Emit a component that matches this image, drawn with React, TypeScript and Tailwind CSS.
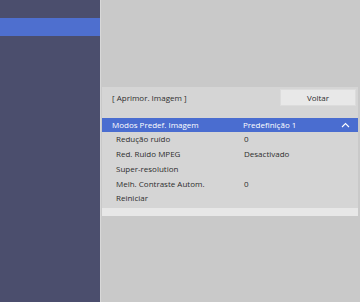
import React from "react";

const rows: { label: string; value?: string }[] = [
  { label: "Redução ruído", value: "0" },
  { label: "Red. Ruido MPEG", value: "Desactivado" },
  { label: "Super-resolution" },
  { label: "Melh. Contraste Autom.", value: "0" },
  { label: "Reiniciar" },
];

export default function App() {
  return (
    <div
      className="flex h-[302px] w-[360px] overflow-hidden text-[8px] text-[#2e2e2e]"
      style={{ fontFamily: '"Open Sans", "Noto Sans", sans-serif' }}
    >
      <div className="w-[100px] shrink-0 bg-[#4b4e6d] pt-[18px]">
        <div className="h-[18px] bg-[#4e6fcf]" />
      </div>
      <div className="flex-1 border-l border-[#d8d8d8] bg-[#c9c9c9] pt-[87px] pl-[1px] pr-[2px]">
        <div className="bg-[#d5d5d5]">
          <div className="flex h-[19px] items-center pt-[2px] pl-[10px] pr-[2px]">
            <span>[ Aprimor. Imagem ]</span>
            <div className="ml-auto flex h-[17px] w-[76px] items-center justify-center border border-[#dcdcdc] bg-[#e8e8e8]">
              Voltar
            </div>
          </div>
          <div className="h-[12px]" />
          <div className="flex h-[14px] items-center bg-[#4a6dd0] pl-[10px] text-white">
            <span className="w-[131px]">Modos Predef. Imagem</span>
            <span>Predefinição 1</span>
            <svg className="ml-auto mr-[8px]" width="9" height="6" viewBox="0 0 9 6">
              <path d="M1 5 L4.5 1.5 L8 5" fill="none" stroke="white" strokeWidth="1.1" />
            </svg>
          </div>
          {rows.map((r) => (
            <div key={r.label} className="flex h-[14.75px] items-center pl-[14px]">
              <span className="w-[128px]">{r.label}</span>
              {r.value && <span>{r.value}</span>}
            </div>
          ))}
          <div className="h-[2.25px]" />
          <div className="h-[8px] bg-[#e7e7e7]" />
        </div>
      </div>
    </div>
  );
}
